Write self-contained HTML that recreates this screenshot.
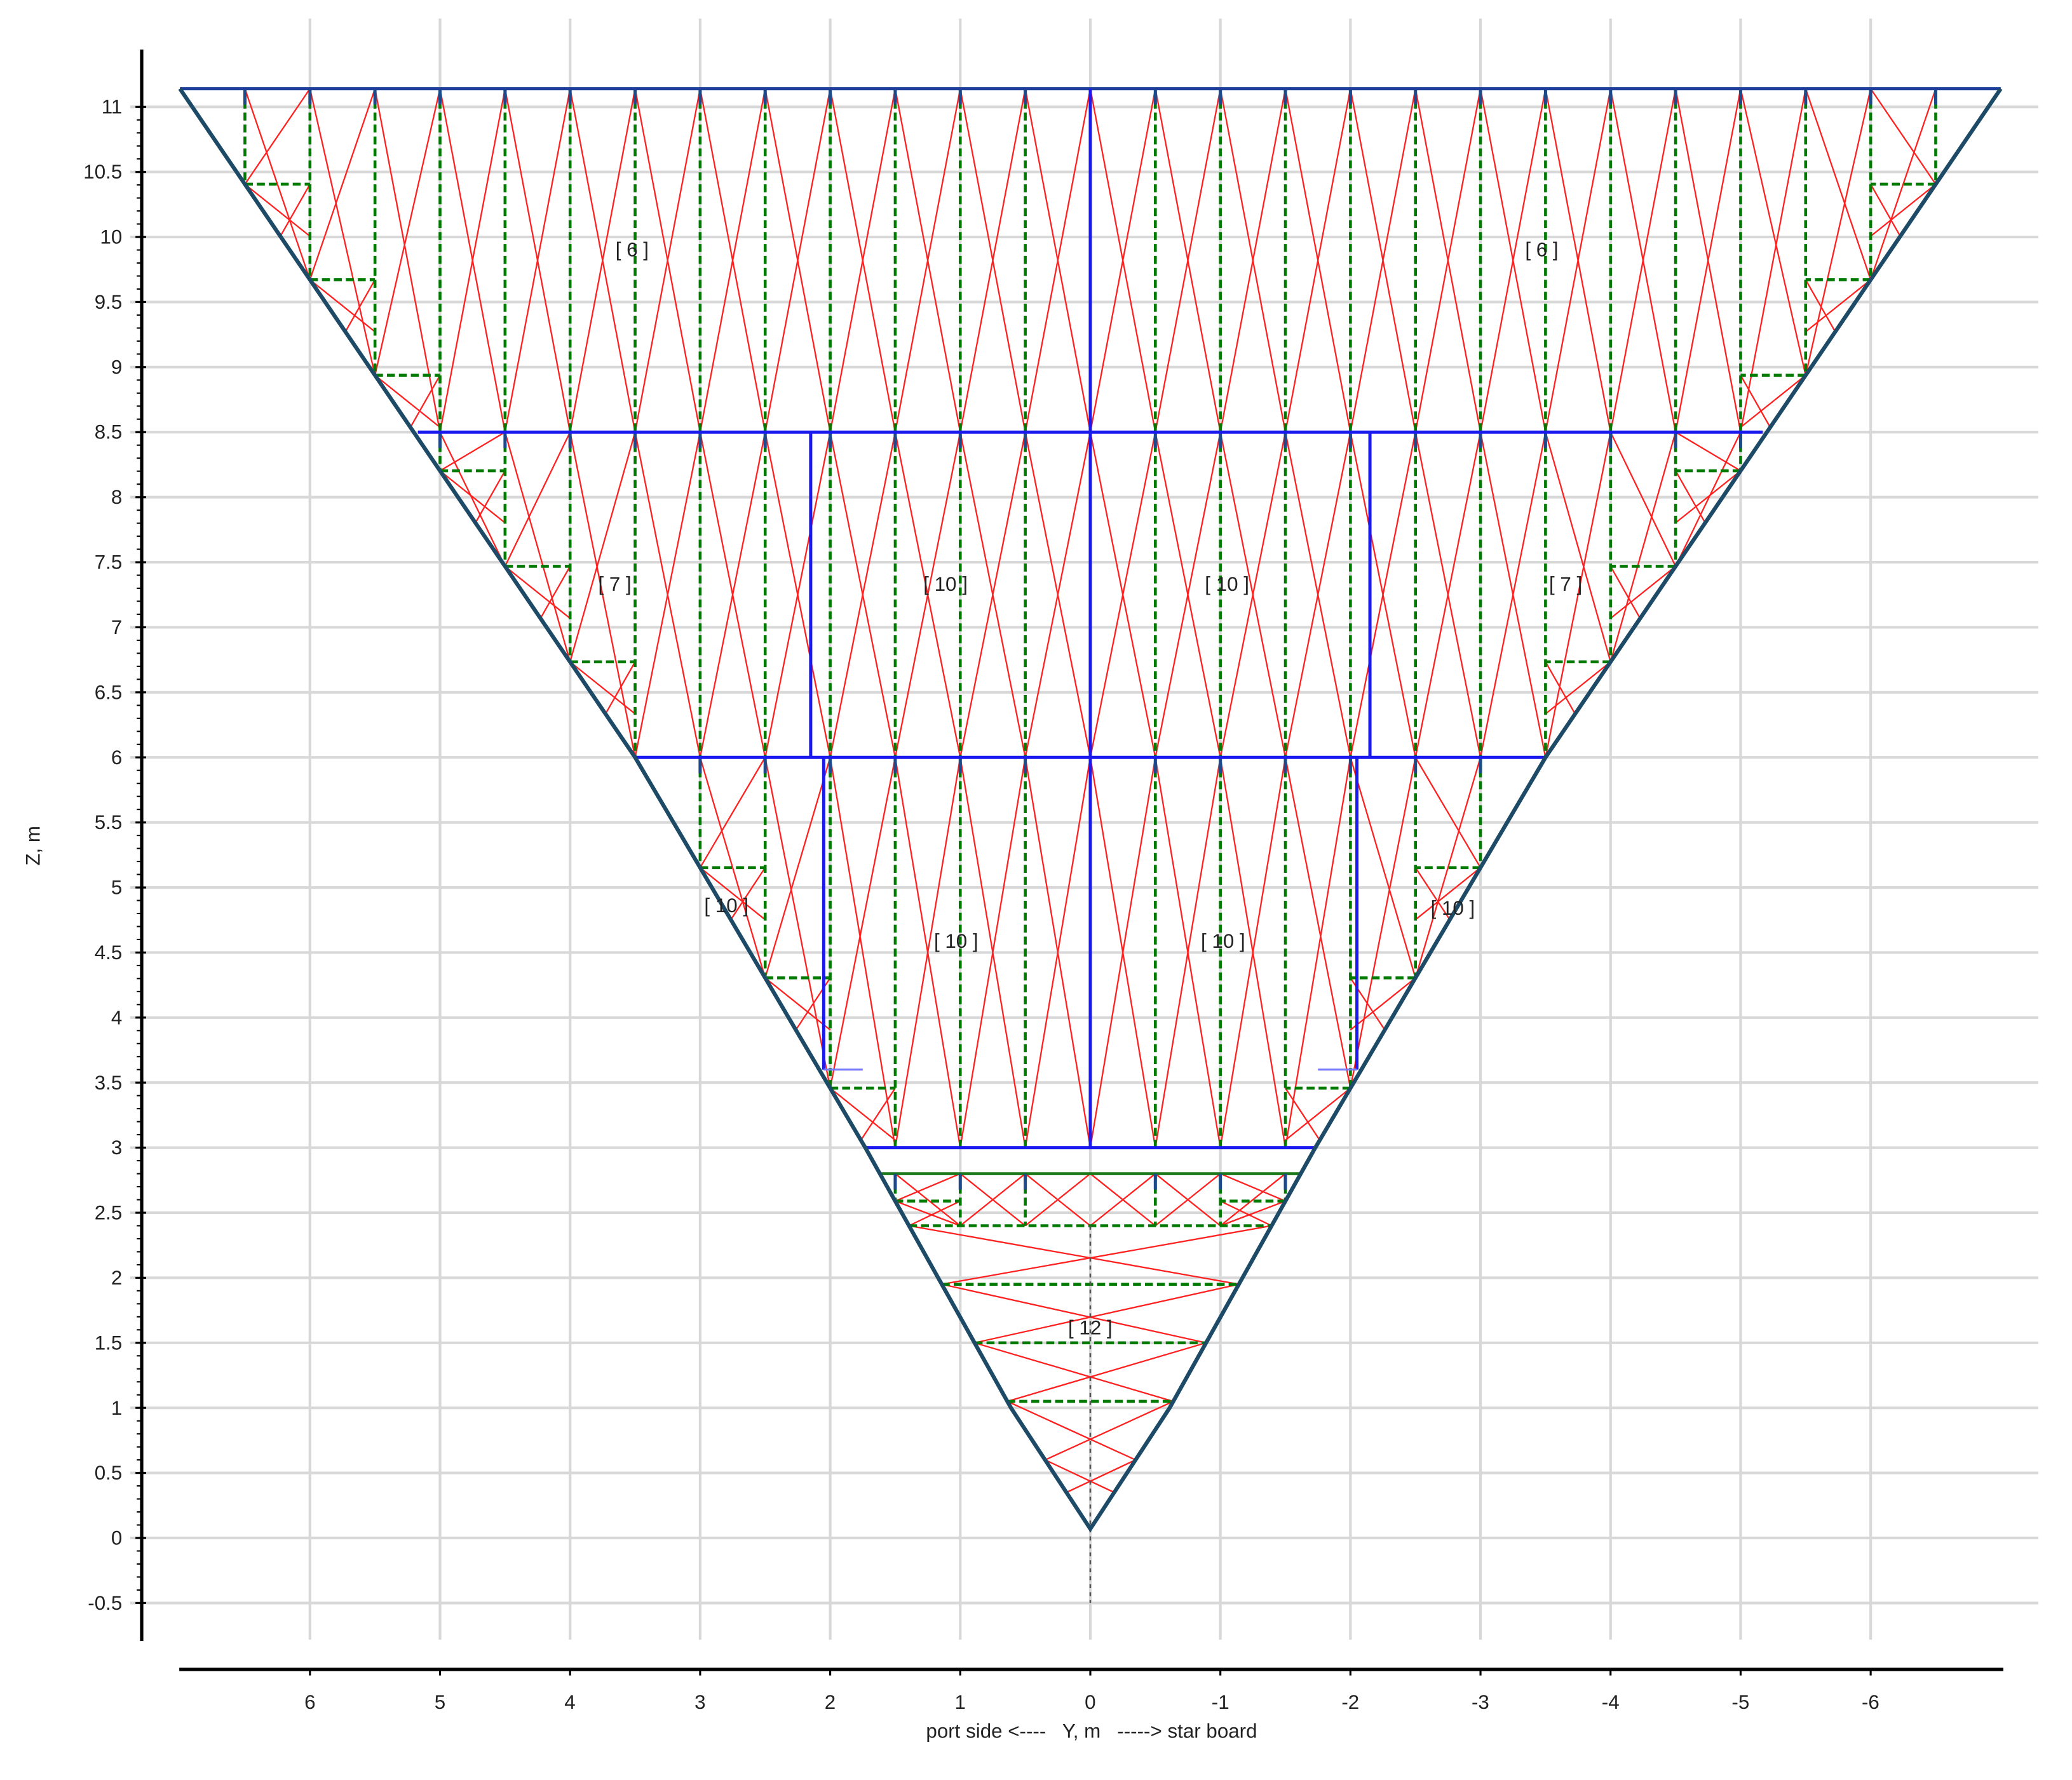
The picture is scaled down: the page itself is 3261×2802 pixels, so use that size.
<!DOCTYPE html>
<html><head><meta charset="utf-8"><style>
html,body{margin:0;padding:0;background:#fff;}
svg{display:block;}
text{font-family:"Liberation Sans",sans-serif;fill:#222;}
</style></head><body>
<svg id="s" width="3261" height="2802" viewBox="0 0 1560.3 1340.7" preserveAspectRatio="none" xmlns="http://www.w3.org/2000/svg">
<g id="grid" stroke="#d8d8d8" stroke-width="2"></g>
<g id="red" stroke="#ff2020" stroke-width="1.1" fill="none"></g>
<g id="green" stroke="#007a00" stroke-width="2.2" stroke-dasharray="6,3" fill="none"></g>
<g id="blue" stroke="#1a1aee" stroke-width="2.4" fill="none"></g>
<g id="hull" stroke="#1d4a66" stroke-width="3" fill="none"></g>
<g id="axes" stroke="#000" stroke-width="2.5"></g>
<g font-size="15" text-anchor="end">
<text x="92" y="85.5">11</text><text x="92" y="134.5">10.5</text><text x="92" y="183.5">10</text><text x="92" y="232.5">9.5</text><text x="92" y="281.5">9</text><text x="92" y="330.5">8.5</text><text x="92" y="379.5">8</text><text x="92" y="428.5">7.5</text><text x="92" y="477.5">7</text><text x="92" y="526.5">6.5</text><text x="92" y="575.5">6</text><text x="92" y="624.5">5.5</text><text x="92" y="673.5">5</text><text x="92" y="722.5">4.5</text><text x="92" y="771.5">4</text><text x="92" y="820.5">3.5</text><text x="92" y="869.5">3</text><text x="92" y="918.5">2.5</text><text x="92" y="967.5">2</text><text x="92" y="1016.5">1.5</text><text x="92" y="1065.5">1</text><text x="92" y="1114.5">0.5</text><text x="92" y="1163.5">0</text><text x="92" y="1212.5">-0.5</text>
</g>
<g font-size="15" text-anchor="middle">
<text x="233.4" y="1287">6</text><text x="331.3" y="1287">5</text><text x="429.2" y="1287">4</text><text x="527.2" y="1287">3</text><text x="625.1" y="1287">2</text><text x="723.1" y="1287">1</text><text x="821" y="1287">0</text><text x="919" y="1287">-1</text><text x="1016.9" y="1287">-2</text><text x="1114.8" y="1287">-3</text><text x="1212.8" y="1287">-4</text><text x="1310.7" y="1287">-5</text><text x="1408.6" y="1287">-6</text>
<text x="822" y="1309">port side &lt;----&#160;&#160; Y, m&#160;&#160; -----&gt; star board</text>
<text x="30" y="637" transform="rotate(-90 30 637)">Z, m</text>
<text x="476" y="193">[ 6 ]</text><text x="1161" y="193">[ 6 ]</text>
<text x="463" y="445">[ 7 ]</text><text x="1179" y="445">[ 7 ]</text>
<text x="712" y="445">[ 10 ]</text><text x="924" y="445">[ 10 ]</text>
<text x="547" y="687">[ 10 ]</text><text x="1094" y="689">[ 10 ]</text>
<text x="720" y="714">[ 10 ]</text><text x="921" y="714">[ 10 ]</text>
<text x="821" y="1005">[ 12 ]</text>
</g>
</svg>
<script>
const NS="http://www.w3.org/2000/svg";
const X=y=>821.05-97.94*y, Z=z=>1158.4-97.99*z;
function L(g,x1,y1,x2,y2,extra){const l=document.createElementNS(NS,"line");l.setAttribute("x1",x1);l.setAttribute("y1",y1);l.setAttribute("x2",x2);l.setAttribute("y2",y2);if(extra)for(const k in extra)l.setAttribute(k,extra[k]);document.getElementById(g).appendChild(l);}
const H=[[0,0.07],[0.61,1],[1.73,3],[3.5,6],[7.0,11.14]];
function hullY(z){for(let i=0;i<H.length-1;i++){const a=H[i],b=H[i+1];if(z<=b[1])return a[0]+(b[0]-a[0])*(z-a[1])/(b[1]-a[1]);}return 7;}
function hullZ(y){y=Math.abs(y);for(let i=0;i<H.length-1;i++){const a=H[i],b=H[i+1];if(y<=b[0])return a[1]+(b[1]-a[1])*(y-a[0])/(b[0]-a[0]);}return 11.14;}
// grid
for(let y=-6;y<=6;y++)L("grid",X(y),14,X(y),1235);
for(let z=-0.5;z<=11.01;z+=0.5)L("grid",98,Z(z),1535,Z(z));
// axes
L("axes",106.7,37.3,106.7,1236);L("axes",135,1257.4,1508.6,1257.4);
for(let z=-0.5;z<=11.01;z+=0.5)L("axes",102,Z(z),110,Z(z),{"stroke-width":1.5});
for(let z=-0.5;z<=11.01;z+=0.1)L("axes",103,Z(z),106,Z(z),{"stroke-width":1});
for(let y=-6;y<=6;y++)L("axes",X(y),1257,X(y),1262,{"stroke-width":1.5});
// bands
function band(zb,zt,ymax){const ys=[];for(let y=-ymax;y<=ymax+0.001;y+=0.5)ys.push(+y.toFixed(2));
 const zv=ys.map(y=>Math.max(zb,hullZ(y)));
 ys.forEach((y,i)=>{if(zv[i]<zt-0.05){if(y!==0){L("green",X(y),Z(zt),X(y),Z(zv[i]));L("blue",X(y),Z(zt),X(y),Z(zt)+12,{"stroke":"#1d4a8a"});}
  if(zv[i]>zb+0.01){const hy=hullY(zv[i])*Math.sign(y);const inner=y-0.5*Math.sign(y);L("green",X(hy),Z(zv[i]),X(inner),Z(zv[i]));}}});
 for(let i=0;i<ys.length-1;i++){if(zv[i]>=zt-0.05&&zv[i+1]>=zt-0.05)continue;
  L("red",X(ys[i]),Z(zt),X(ys[i+1]),Z(zv[i+1]));L("red",X(ys[i+1]),Z(zt),X(ys[i]),Z(zv[i]));}
 ys.forEach((y,i)=>{if(zv[i]>zb+0.01&&zv[i]<zt){const inner=y-0.5*Math.sign(y);const z2=Math.max(zb,zv[i]-0.4);const hb=hullY(z2)*Math.sign(y);
   L("red",X(hullY(zv[i])*Math.sign(y)),Z(zv[i]),X(inner),Z(z2));L("red",X(inner),Z(zv[i]),X(hb),Z(z2));}});
}
band(8.5,11.14,6.5);band(6,8.5,5);band(3,6,3);band(2.4,2.8,1.5);
// bottom
const lv=[2.4,1.95,1.5,1.05];
lv.forEach(z=>{const h=hullY(z);L("green",X(h),Z(z),X(-h),Z(z));});
const lv2=[2.4,1.95,1.5,1.05,0.6,0.35];
for(let i=0;i<lv2.length-1;i++){const a=lv2[i],b=lv2[i+1];L("red",X(hullY(a)),Z(a),X(-hullY(b)),Z(b));L("red",X(-hullY(a)),Z(a),X(hullY(b)),Z(b));}
L("hull",X(0),Z(2.4),X(0),Z(-0.5),{"stroke":"#555","stroke-width":1.2,"stroke-dasharray":"3,3"});
L("green",X(hullY(2.8)),Z(2.8),X(-hullY(2.8)),Z(2.8),{"stroke-dasharray":"none","stroke":"#1a7a1a"});
// blue
L("blue",X(7),Z(11.14),X(-7),Z(11.14),{"stroke":"#1d3f9a"});
L("blue",X(5.17),Z(8.5),X(-5.17),Z(8.5));
L("blue",X(3.5),Z(6),X(-3.5),Z(6));
L("blue",X(1.73),Z(3),X(-1.73),Z(3));
L("blue",X(0),Z(11.14),X(0),Z(3));
L("blue",X(2.15),Z(8.5),X(2.15),Z(6));L("blue",X(-2.15),Z(8.5),X(-2.15),Z(6));
L("blue",X(2.05),Z(6),X(2.05),Z(3.6));L("blue",X(-2.05),Z(6),X(-2.05),Z(3.6));
L("blue",X(2.05),Z(3.6),X(1.75),Z(3.6),{"stroke":"#7777ff","stroke-width":1.5});L("blue",X(-2.05),Z(3.6),X(-1.75),Z(3.6),{"stroke":"#7777ff","stroke-width":1.5});
// hull
const p=document.createElementNS(NS,"polyline");let pts=[];
for(let i=H.length-1;i>=0;i--)pts.push(X(H[i][0])+","+Z(H[i][1]));
for(let i=1;i<H.length;i++)pts.push(X(-H[i][0])+","+Z(H[i][1]));
p.setAttribute("points",pts.join(" "));document.getElementById("hull").appendChild(p);
</script>
</body></html>
